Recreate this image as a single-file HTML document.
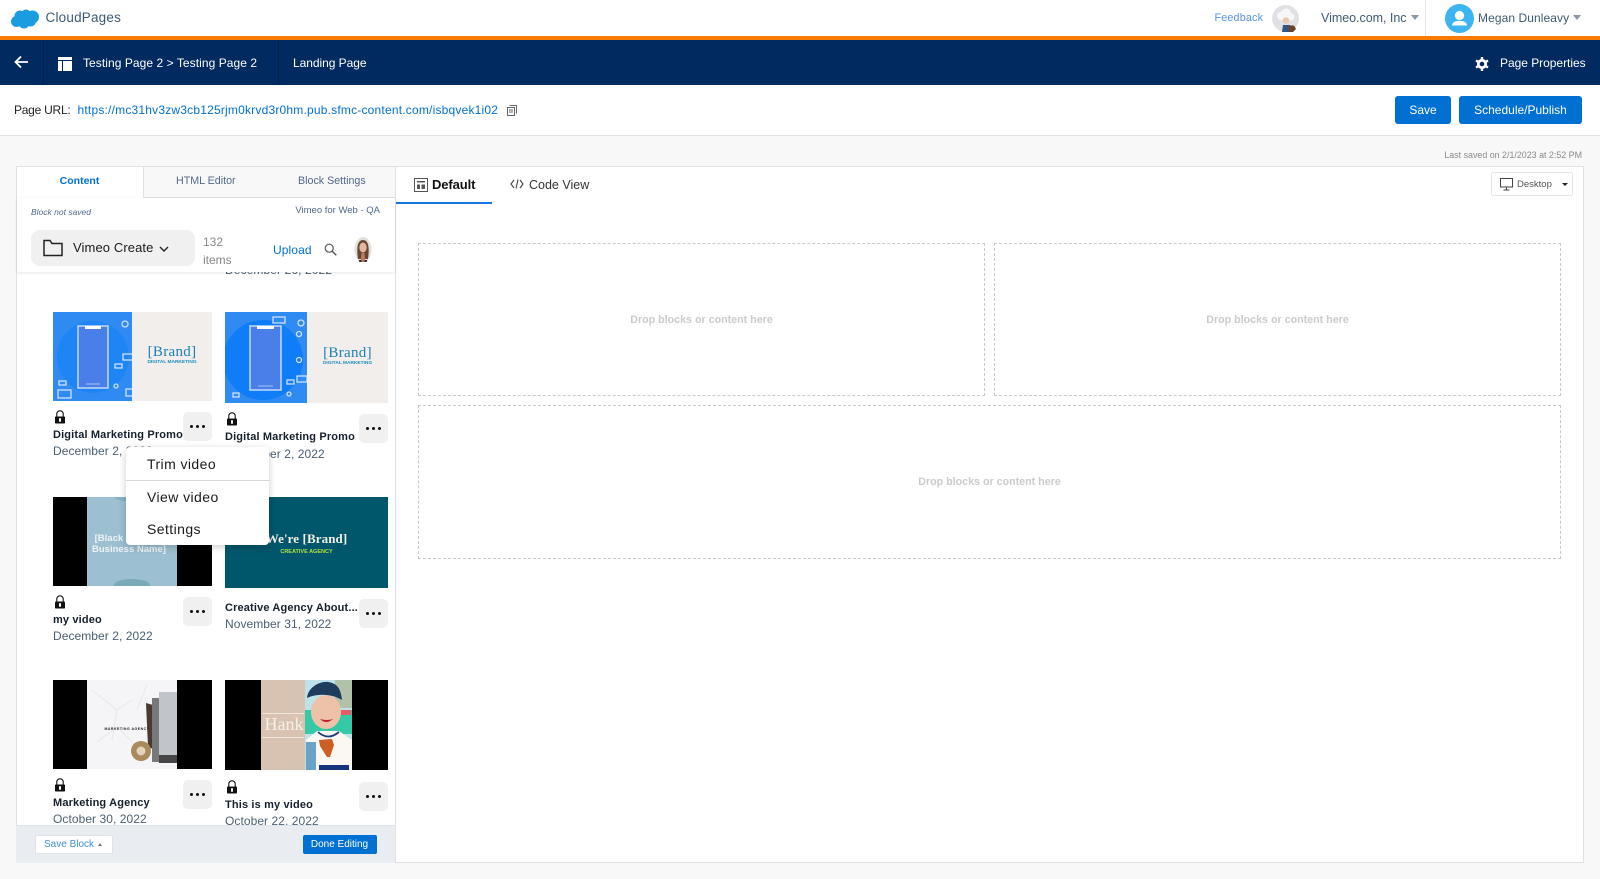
<!DOCTYPE html>
<html><head><meta charset="utf-8"><title>CloudPages</title>
<style>
*{box-sizing:border-box}
html,body{margin:0;padding:0;width:1600px;height:879px;overflow:hidden;background:#f8f8f8;font-family:"Liberation Sans",sans-serif}
.a{position:absolute}
.t{position:absolute;white-space:nowrap;line-height:16px;height:16px}
.dots{position:absolute;width:29px;height:29px;background:#f0f0f0;border-radius:5px;text-align:center}
.dots i{display:inline-block;width:3.5px;height:3.5px;border-radius:50%;background:#111;margin:12.5px 1.25px 0;vertical-align:top}
.title{font-size:11px;font-weight:bold;color:#16202c;letter-spacing:.15px}
.date{font-size:12px;color:#4a5f73;letter-spacing:.06px}
.drop{position:absolute;border:1px dashed #c9c9c9;}
.drop span{position:absolute;left:0;right:0;text-align:center;top:50%;margin-top:-8px;line-height:16px;font-size:10.7px;font-weight:bold;color:#cbcbcb}
.thumb{position:absolute;overflow:hidden}
.menu{font-size:14px;color:#1a1a1a;letter-spacing:.42px}
</style></head><body>

<!-- header -->
<div class="a" style="left:0;top:0;width:1600px;height:36px;background:#fff"></div>
<div class="a" style="left:0;top:36px;width:1600px;height:4px;background:#f87b05"></div>
<svg class="a" style="left:10px;top:8px" width="30" height="22" viewBox="0 0 30 22"><g fill="#1b9be0"><circle cx="10" cy="8" r="5.5"/><circle cx="16" cy="6.500" r="5"/><circle cx="22.500" cy="9" r="6.500"/><circle cx="6.500" cy="13.500" r="5.500"/><circle cx="14" cy="15" r="5.500"/><circle cx="20.500" cy="13" r="5.500"/><rect x="7" y="7" width="16" height="10"/></g></svg>
<div class="t" style="left:45.500px;top:10px;font-size:13.500px;color:#3e5a74;letter-spacing:.2px">CloudPages</div>
<div class="t" style="left:1214.500px;top:10px;font-size:10.800px;color:#5c94e0;letter-spacing:.15px">Feedback</div>
<svg class="a" style="left:1272px;top:5px" width="27" height="27" viewBox="0 0 27 27"><circle cx="13.500" cy="13.500" r="13.500" fill="#dfe1e4"/><circle cx="9" cy="11" r="4" fill="#f7f7f7"/><circle cx="14" cy="8.500" r="5" fill="#f7f7f7"/><circle cx="19" cy="12" r="3.500" fill="#f7f7f7"/><circle cx="14" cy="15.500" r="3.200" fill="#e9c6ad"/><path d="M10 27l1-7h7l2 7z" fill="#33557f"/><path d="M17 20.500l5 0 2 3.500-3 3h-4z" fill="#6a4225"/></svg>
<div class="t" style="left:1321px;top:10px;font-size:12.500px;color:#3e5a74;letter-spacing:-.03px">Vimeo.com, Inc</div>
<div class="a" style="left:1411px;top:15px;border:4.500px solid transparent;border-top:5.500px solid #8a96a3;border-bottom:0"></div>
<div class="a" style="left:1425px;top:0;width:1px;height:36px;background:#e6e6e6"></div>
<svg class="a" style="left:1445px;top:4px" width="29" height="29" viewBox="0 0 29 29"><circle cx="14.500" cy="14.500" r="14.500" fill="#3cb4f0"/><circle cx="14.500" cy="11.500" r="4.600" fill="#fff"/><path d="M7 21.500c0-3 3-4.600 7.500-4.600s7.500 1.600 7.500 4.600z" fill="#fff"/></svg>
<div class="t" style="left:1478px;top:10px;font-size:12px;color:#3e5a74;letter-spacing:.08px">Megan Dunleavy</div>
<div class="a" style="left:1573px;top:15px;border:4.500px solid transparent;border-top:5.500px solid #8a96a3;border-bottom:0"></div>

<!-- nav -->
<div class="a" style="left:0;top:40px;width:1600px;height:45px;background:#012b60"></div>
<div class="a" style="left:43px;top:40px;width:1px;height:45px;background:#021f45"></div>
<div class="a" style="left:278px;top:40px;width:1px;height:45px;background:#021f45"></div>
<svg class="a" style="left:14px;top:55px" width="15" height="14" viewBox="0 0 15 14"><path d="M14 7H2M7 1.500L1.500 7 7 12.500" fill="none" stroke="#fff" stroke-width="1.800"/></svg>
<svg class="a" style="left:58px;top:57px" width="14" height="14" viewBox="0 0 14 14"><path d="M0 0h14v3H0zM0 4h4v10H0zM5 4h9v10H5z" fill="#fff"/></svg>
<div class="t" style="left:83px;top:55px;font-size:12px;color:#fff;letter-spacing:.06px">Testing Page 2 &gt; Testing Page 2</div>
<div class="t" style="left:293px;top:55px;font-size:12px;color:#fff;letter-spacing:-.05px">Landing Page</div>
<svg class="a" style="left:1475px;top:57px" width="14" height="14" viewBox="0 0 14 14"><circle cx="7" cy="7" r="3.700" fill="none" stroke="#fff" stroke-width="2.800"/><g stroke="#fff" stroke-width="2.400"><path d="M7 0v3M7 11v3M1 3.500l2.500 1.500M10.500 9l2.500 1.500M1 10.500L3.500 9M10.500 5L13 3.500"/></g></svg>
<div class="t" style="left:1500px;top:55px;font-size:12px;color:#fff;letter-spacing:-.03px">Page Properties</div>

<!-- url row -->
<div class="a" style="left:0;top:85px;width:1600px;height:51px;background:#fff;border-bottom:1px solid #e2e2e2"></div>
<div class="t" style="left:14px;top:102px;font-size:12px;color:#222;letter-spacing:-.25px">Page URL:</div>
<div class="t" style="left:77.500px;top:102px;font-size:12px;color:#0070d2;letter-spacing:.2px">https://mc31hv3zw3cb125rjm0krvd3r0hm.pub.sfmc-content.com/isbqvek1i02</div>
<svg class="a" style="left:507px;top:105px" width="10" height="11" viewBox="0 0 10 11"><rect x=".5" y="2.500" width="7" height="8" fill="#fff" stroke="#666"/><path d="M2.500 .5h7v8" fill="none" stroke="#666"/><path d="M2 5h4M2 7h4" stroke="#666"/></svg>
<div class="a" style="left:1395px;top:96px;width:56px;height:28px;background:#0070d2;border-radius:3px;color:#fff;font-size:12px;text-align:center;line-height:28px">Save</div>
<div class="a" style="left:1459px;top:96px;width:123px;height:28px;background:#0070d2;border-radius:3px;color:#fff;font-size:12px;text-align:center;line-height:28px">Schedule/Publish</div>
<div class="t" style="left:1300px;width:282px;text-align:right;top:147px;font-size:8.900px;color:#8a8a8a">Last saved on 2/1/2023 at 2:52 PM</div>

<!-- main panel -->
<div class="a" style="left:16px;top:166px;width:1568px;height:697px;background:#fff;border:1px solid #dfe1e5"></div>

<!-- right pane -->
<div class="a" style="left:395px;top:166px;width:1px;height:697px;background:#dfe1e5"></div>
<svg class="a" style="left:414px;top:178px" width="14" height="14" viewBox="0 0 14 14"><rect x=".5" y=".5" width="13" height="13" fill="none" stroke="#555"/><path d="M3 3h8v1.500H3zM3 6.500h3V11H3zM7.500 6.500H11V11H7.500z" fill="#555"/></svg>
<div class="t" style="left:432px;top:177px;font-size:13px;font-weight:bold;color:#111;letter-spacing:-.1px">Default</div>
<div class="a" style="left:396px;top:202px;width:96px;height:2px;background:#1b74e0"></div>
<svg class="a" style="left:510px;top:178px" width="14" height="12" viewBox="0 0 14 12"><path d="M4 2L1 6l3 4M10 2l3 4-3 4M8 1.500L6 10.500" fill="none" stroke="#444" stroke-width="1.100"/></svg>
<div class="t" style="left:529px;top:177px;font-size:12.500px;color:#333">Code View</div>
<div class="a" style="left:1491px;top:172px;width:82px;height:24px;background:#fff;border:1px solid #e4e4e4;border-radius:2px"></div>
<svg class="a" style="left:1500px;top:178px" width="13" height="13" viewBox="0 0 13 13"><rect x=".5" y=".5" width="12" height="8.500" fill="none" stroke="#444"/><path d="M6.500 9v2.500M3.500 12h6" stroke="#444"/></svg>
<div class="t" style="left:1517px;top:176.500px;font-size:9.500px;color:#555">Desktop</div>
<div class="a" style="left:1562px;top:183px;border:3px solid transparent;border-top:3px solid #222;border-bottom:0"></div>

<div class="drop" style="left:418px;top:243px;width:567px;height:153px"><span>Drop blocks or content here</span></div>
<div class="drop" style="left:994px;top:243px;width:567px;height:153px"><span>Drop blocks or content here</span></div>
<div class="drop" style="left:418px;top:405px;width:1143px;height:154px"><span>Drop blocks or content here</span></div>

<!-- left pane -->
<div class="a" style="left:143px;top:167px;width:252px;height:31px;background:#f8f8f8;border-bottom:1px solid #dfe1e5;border-left:1px solid #dfe1e5"></div>
<div class="t" style="left:17px;width:125px;text-align:center;top:173px;font-size:10.500px;font-weight:bold;color:#0070d2">Content</div>
<div class="t" style="left:176px;top:173px;font-size:10.700px;color:#54698d">HTML Editor</div>
<div class="t" style="left:298px;top:173px;font-size:10.700px;color:#54698d">Block Settings</div>

<div class="t" style="left:225px;top:261.500px;font-size:12px;color:#4a5f73;letter-spacing:.1px">December 26, 2022</div>
<div class="a" style="left:17px;top:198px;width:378px;height:74px;background:#fff;box-shadow:0 1px 3px rgba(0,0,0,.1)"></div>
<div class="t" style="left:31px;top:204px;font-size:8.500px;font-style:italic;color:#54698d">Block not saved</div>
<div class="t" style="left:240px;width:140px;text-align:right;top:202.500px;font-size:9.500px;color:#54698d">Vimeo for Web - QA</div>
<div class="a" style="left:31px;top:230px;width:164px;height:36px;background:#f0f0f0;border-radius:9px"></div>
<svg class="a" style="left:43px;top:239px" width="20" height="18" viewBox="0 0 20 18"><path d="M1 16.500V1.500h6l2 3h10v12z" fill="none" stroke="#222" stroke-width="1.500"/></svg>
<div class="t" style="left:73px;top:240px;font-size:13px;color:#1a1a1a;letter-spacing:.1px">Vimeo Create</div>
<svg class="a" style="left:159px;top:246px" width="10" height="7" viewBox="0 0 10 7"><path d="M1 1l4 4 4-4" fill="none" stroke="#222" stroke-width="1.400"/></svg>
<div class="t" style="left:203px;top:234px;font-size:12px;color:#888">132</div>
<div class="t" style="left:203px;top:252px;font-size:12px;color:#888">items</div>
<div class="t" style="left:273px;top:241.500px;font-size:12px;color:#0070d2;letter-spacing:.1px">Upload</div>
<svg class="a" style="left:324px;top:243px" width="13" height="13" viewBox="0 0 13 13"><circle cx="5.200" cy="5.200" r="4" fill="none" stroke="#555" stroke-width="1.200"/><path d="M8 8l4.300 4.300" stroke="#555" stroke-width="1.400"/></svg>
<svg class="a" style="left:354px;top:237px" width="18" height="25" viewBox="0 0 18 25"><ellipse cx="9" cy="12.500" rx="8.500" ry="12.500" fill="#dfe3dc"/><path d="M4 22C2.500 12 3 3 9 3s6.500 9 5 19z" fill="#6a4630"/><ellipse cx="9" cy="10.500" rx="3.700" ry="5" fill="#e3b7a2"/><path d="M6.500 25l1-9h3l1 9z" fill="#b87b63"/><path d="M4.500 23h3v2h-2zM10.500 23h3l-1 2h-2z" fill="#3a2a22"/></svg>

<!-- row 1 -->
<div class="thumb" style="left:53px;top:312px;width:159px;height:89px;background:#f1eeeb">
 <svg class="a" style="left:0;top:0" width="79" height="89" viewBox="0 0 79 89"><rect width="79" height="89" fill="#2f8bf2"/><circle cx="40" cy="45" r="36" fill="#1f84f4"/><rect x="25" y="14" width="30" height="62" fill="#4a7ee8" stroke="#c3d9f8" stroke-width="1.500"/><rect x="32" y="14" width="16" height="3" fill="#fff"/><path d="M33 72h14" stroke="#a9c4f0"/><g fill="none" stroke="#cfe0fa" stroke-width="1.300"><circle cx="72" cy="12" r="3"/><rect x="70" y="42" width="10" height="6"/><rect x="62" y="52" width="7" height="4"/><circle cx="63" cy="74" r="2"/><rect x="6" y="69" width="7" height="4"/><rect x="5" y="78" width="13" height="8"/><rect x="73" y="77" width="7" height="7"/></g></svg>
 <div class="a" style="left:79px;right:0;top:30px;text-align:center;font:15px/20px 'Liberation Serif',serif;color:#1d7fb5;letter-spacing:.3px">[Brand]</div>
 <div class="a" style="left:79px;right:0;top:48px;text-align:center;font:bold 4.800px/6px 'Liberation Sans',sans-serif;color:#1c8cc0">DIGITAL MARKETING</div>
</div>
<div class="thumb" style="left:225px;top:312px;width:163px;height:91px;background:#f1eeeb">
 <svg class="a" style="left:0;top:0" width="82" height="91" viewBox="0 0 82 91"><rect width="82" height="91" fill="#2f8bf2"/><circle cx="38" cy="48" r="40" fill="#0f7df8"/><rect x="25" y="14" width="31" height="64" fill="#4a7ee8" stroke="#c3d9f8" stroke-width="1.500"/><rect x="32" y="14" width="17" height="3" fill="#fff"/><path d="M33 74h15" stroke="#a9c4f0"/><g fill="none" stroke="#cfe0fa" stroke-width="1.300"><rect x="48" y="5" width="12" height="6"/><circle cx="76" cy="11" r="3"/><circle cx="74" cy="22" r="2.500"/><circle cx="74" cy="48" r="2.500"/><rect x="72" y="64" width="10" height="6"/><rect x="62" y="68" width="7" height="4"/><circle cx="64" cy="82" r="2"/><rect x="8" y="81" width="6" height="4"/></g></svg>
 <div class="a" style="left:82px;right:0;top:31px;text-align:center;font:15px/20px 'Liberation Serif',serif;color:#1d7fb5;letter-spacing:.3px">[Brand]</div>
 <div class="a" style="left:82px;right:0;top:49px;text-align:center;font:bold 4.800px/6px 'Liberation Sans',sans-serif;color:#1c8cc0">DIGITAL MARKETING</div>
</div>

<svg class="a" style="left:54px;top:410px" width="12" height="14" viewBox="0 0 12 14"><path d="M2.800 7V3.800a3.200 3 0 0 1 6.400 0V7" fill="none" stroke="#111" stroke-width="1.100"/><rect x="1" y="6.500" width="10" height="7" rx=".8" fill="#111"/><rect x="5" y="8.200" width="2" height="3.500" fill="#fff"/></svg>
<div class="t title" style="left:53px;top:426.500px">Digital Marketing Promo</div>
<div class="t date" style="left:53px;top:443px">December 2, 2022</div>
<div class="dots" style="left:183px;top:412px"><i></i><i></i><i></i></div>

<svg class="a" style="left:226px;top:412px" width="12" height="14" viewBox="0 0 12 14"><path d="M2.800 7V3.800a3.200 3 0 0 1 6.400 0V7" fill="none" stroke="#111" stroke-width="1.100"/><rect x="1" y="6.500" width="10" height="7" rx=".8" fill="#111"/><rect x="5" y="8.200" width="2" height="3.500" fill="#fff"/></svg>
<div class="t title" style="left:225px;top:429px">Digital Marketing Promo</div>
<div class="t date" style="left:225px;top:445.500px">December 2, 2022</div>
<div class="dots" style="left:359px;top:414px"><i></i><i></i><i></i></div>

<!-- row 2 -->
<div class="thumb" style="left:53px;top:497px;width:159px;height:89px;background:#000">
 <div class="a" style="left:34px;top:0;width:90px;height:89px;background:#9cbfd1"></div>
 <div class="a" style="left:39px;top:37px;font:bold 9.500px/10.500px 'Liberation Sans',sans-serif;color:#eef3f6;white-space:nowrap">&nbsp;[Black<br>Business Name]</div>
 <div class="a" style="left:61px;top:82px;width:36px;height:12px;border-radius:50%;background:#7aa9b8"></div>
 <div class="a" style="left:61px;top:-7px;width:36px;height:12px;border-radius:50%;background:#88b3c4"></div>
</div>
<div class="thumb" style="left:225px;top:497px;width:163px;height:91px;background:#00566b">
 <div class="a" style="left:0;right:0;top:33.500px;text-align:center;font:bold 13px/16px 'Liberation Serif',serif;color:#f3efe2;letter-spacing:.1px">We're [Brand]</div>
 <div class="a" style="left:0;right:0;top:51px;text-align:center;font:bold 5.500px/8px 'Liberation Sans',sans-serif;color:#b4e23b">CREATIVE AGENCY</div>
</div>
<svg class="a" style="left:54px;top:595px" width="12" height="14" viewBox="0 0 12 14"><path d="M2.800 7V3.800a3.200 3 0 0 1 6.400 0V7" fill="none" stroke="#111" stroke-width="1.100"/><rect x="1" y="6.500" width="10" height="7" rx=".8" fill="#111"/><rect x="5" y="8.200" width="2" height="3.500" fill="#fff"/></svg>
<div class="t title" style="left:53px;top:611.500px">my video</div>
<div class="t date" style="left:53px;top:628px">December 2, 2022</div>
<div class="dots" style="left:183px;top:597px"><i></i><i></i><i></i></div>
<div class="t title" style="left:225px;top:600px">Creative Agency About...</div>
<div class="t date" style="left:225px;top:616px">November 31, 2022</div>
<div class="dots" style="left:359px;top:599px"><i></i><i></i><i></i></div>

<!-- row 3 -->
<div class="thumb" style="left:53px;top:680px;width:159px;height:89px;background:#000">
 <svg class="a" style="left:34px;top:0" width="90" height="89" viewBox="0 0 90 89"><rect width="90" height="89" fill="#f5f5f7"/><path d="M5 10l25 20 15-10M10 62l20-15 25 25M30 30l-5 30M60 5l-10 25" fill="none" stroke="#e6e7ea"/><path d="M59 23l7 2v44l-5-2z" fill="#4a3b30"/><rect x="65" y="18" width="8" height="64" fill="#77787a"/><rect x="72" y="12" width="18" height="63" fill="#c1c5c9"/><rect x="72" y="75" width="18" height="8" fill="#454545"/><circle cx="54" cy="71" r="10" fill="#a88a5c"/><circle cx="54" cy="71" r="4.500" fill="#e2d3ba"/></svg>
 <div class="a" style="left:39px;top:46px;width:70px;text-align:center;font:bold 3.500px/6px 'Liberation Sans',sans-serif;color:#222;letter-spacing:.5px">MARKETING AGENCY</div>
</div>
<div class="thumb" style="left:225px;top:680px;width:163px;height:90px;background:#000">
 <div class="a" style="left:36px;top:0;width:44px;height:91px;background:#d8c3b2"></div>
 <div class="a" style="left:37px;top:33px;width:42px;height:1px;background:#efe6dd"></div>
 <div class="a" style="left:37px;top:57px;width:42px;height:1px;background:#efe6dd"></div>
 <div class="a" style="left:37px;top:33px;width:44px;text-align:center;font:18px/22px 'Liberation Serif',serif;color:#f6f0e8">Hank</div>
 <svg class="a" style="left:80px;top:0" width="47" height="90" viewBox="0 0 47 90"><rect width="47" height="90" fill="#bfe2ea"/><path d="M30 0h17v28H30z" fill="#b2c2a8"/><rect y="30" width="47" height="24" fill="#35c9a6"/><rect x="36" y="30" width="10" height="5" fill="#e65b68"/><path d="M1 90V60l11-9h22l13 9v30z" fill="#fbf8f4"/><rect x="1" y="62" width="10" height="28" fill="#6aa3c6"/><path d="M13 52q10 9 21 0" fill="none" stroke="#1f3a78" stroke-width="1.800"/><rect x="14" y="85" width="30" height="5" fill="#15347d"/><ellipse cx="21" cy="32" rx="15" ry="17" fill="#eec1a9"/><path d="M2 18C3 7 15 1 23 2c9 1 13 7 14 18-10-6-24-7-35-2z" fill="#1d3c5e"/><path d="M15 39q6 6 13 0-6 2-13 0z" fill="#c0202c"/><path d="M14 60l13-1 2 6-4 12h-3l-7-11z" fill="#cc5d25"/></svg>
</div>
<svg class="a" style="left:54px;top:778px" width="12" height="14" viewBox="0 0 12 14"><path d="M2.800 7V3.800a3.200 3 0 0 1 6.400 0V7" fill="none" stroke="#111" stroke-width="1.100"/><rect x="1" y="6.500" width="10" height="7" rx=".8" fill="#111"/><rect x="5" y="8.200" width="2" height="3.500" fill="#fff"/></svg>
<div class="t title" style="left:53px;top:794.500px">Marketing Agency</div>
<div class="t date" style="left:53px;top:811px">October 30, 2022</div>
<div class="dots" style="left:183px;top:780px"><i></i><i></i><i></i></div>
<svg class="a" style="left:226px;top:780px" width="12" height="14" viewBox="0 0 12 14"><path d="M2.800 7V3.800a3.200 3 0 0 1 6.400 0V7" fill="none" stroke="#111" stroke-width="1.100"/><rect x="1" y="6.500" width="10" height="7" rx=".8" fill="#111"/><rect x="5" y="8.200" width="2" height="3.500" fill="#fff"/></svg>
<div class="t title" style="left:225px;top:796.500px">This is my video</div>
<div class="t date" style="left:225px;top:813px">October 22, 2022</div>
<div class="dots" style="left:359px;top:782px"><i></i><i></i><i></i></div>

<!-- footer -->
<div class="a" style="left:16px;top:825px;width:379px;height:38px;background:#e9edf2;border-top:1px solid #e0e4e9"></div>
<div class="a" style="left:35px;top:835px;width:78px;height:19px;background:#fff;border:1px solid #dfe3e8;border-radius:2px"></div>
<div class="t" style="left:44px;top:836.500px;font-size:10px;color:#3f8fd2">Save Block</div>
<div class="a" style="left:98px;top:843px;border:2.500px solid transparent;border-bottom:3.500px solid #777;border-top:0"></div>
<div class="a" style="left:302.500px;top:835px;width:74px;height:19px;background:#0070d2;border-radius:2px;color:#fff;font-size:10px;line-height:20px;text-align:center">Done Editing</div>

<!-- context menu -->
<div class="a" style="left:126px;top:447px;width:143px;height:98px;background:#fff;border-radius:4px;box-shadow:0 2px 8px rgba(0,0,0,.2)"></div>
<div class="a" style="left:126px;top:480px;width:143px;height:1px;background:#d8d8d8"></div>
<div class="t menu" style="left:147px;top:456px">Trim video</div>
<div class="t menu" style="left:147px;top:489px">View video</div>
<div class="t menu" style="left:147px;top:521px">Settings</div>
</body></html>
